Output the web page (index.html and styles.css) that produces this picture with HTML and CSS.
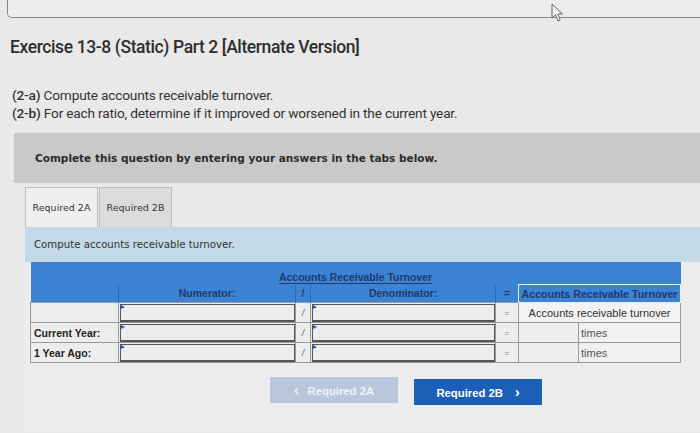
FILE: index.html
```html
<!DOCTYPE html>
<html>
<head>
<meta charset="utf-8">
<link rel="stylesheet" href="styles.css">
</head>
<body>
<div class="topbar"></div>
<svg class="cursor" width="14" height="20" viewBox="0 0 14 20"><path d="M1 1 L1 15 L4.5 11.8 L7 18 L9.2 17 L6.8 11 L11.5 11 Z" fill="#f2f2f2" stroke="#666" stroke-width="1"/></svg>
<h1 class="title">Exercise 13-8 (Static) Part 2 [Alternate Version]</h1>
<div class="prompt">
  <p><b>(2-a)</b> Compute accounts receivable turnover.</p>
  <p><b>(2-b)</b> For each ratio, determine if it improved or worsened in the current year.</p>
</div>
<div class="notice">Complete this question by entering your answers in the tabs below.</div>
<div class="tabs">
  <div class="tab active">Required 2A</div>
  <div class="tab">Required 2B</div>
</div>
<div class="instruction">Compute accounts receivable turnover.</div>
<div class="work">
<table class="grid">
  <colgroup>
    <col class="c-label"><col class="c-num"><col class="c-slash"><col class="c-den"><col class="c-eq"><col class="c-res"><col class="c-unit">
  </colgroup>
  <tr class="h1"><th colspan="7"><u>Accounts Receivable Turnover</u></th></tr>
  <tr class="h2">
    <th></th><th>Numerator:</th><th>/</th><th>Denominator:</th><th>=</th><th colspan="2" class="reshead">Accounts Receivable Turnover</th>
  </tr>
  <tr>
    <td class="label"></td>
    <td class="inp"><div class="box"></div></td><td class="op">/</td>
    <td class="inp"><div class="box"></div></td><td class="op eq">=</td>
    <td colspan="2" class="restext">Accounts receivable turnover</td>
  </tr>
  <tr>
    <td class="label">Current Year:</td>
    <td class="inp"><div class="box"></div></td><td class="op">/</td>
    <td class="inp"><div class="box"></div></td><td class="op eq">=</td>
    <td class="resin"></td><td class="unit">times</td>
  </tr>
  <tr>
    <td class="label">1 Year Ago:</td>
    <td class="inp"><div class="box"></div></td><td class="op">/</td>
    <td class="inp"><div class="box"></div></td><td class="op eq">=</td>
    <td class="resin"></td><td class="unit">times</td>
  </tr>
</table>
<div class="nav">
  <div class="btn prev"><span class="chev">&lsaquo;</span>Required 2A</div>
  <div class="btn next">Required 2B<span class="chev after">&rsaquo;</span></div>
</div>
</div>
</body>
</html>
```
FILE: styles.css
```css
html, body { margin: 0; padding: 0; }
body {
  width: 700px; height: 433px; overflow: hidden;
  background: #e9e9e9;
  font-family: "Liberation Sans", Arial, sans-serif;
  color: #333;
  position: relative;
}
.topbar {
  margin-left: 7px;
  height: 17px;
  border-left: 1px solid #888;
  border-bottom: 1px solid #888;
  border-bottom-left-radius: 5px;
  background: #ececec;
}
.cursor { position: absolute; left: 551px; top: 3px; }
.title {
  margin: 19px 0 0 10px;
  font-family: Roboto, sans-serif;
  font-weight: 500;
  font-size: 17.5px;
  letter-spacing: -0.4px;
  color: #2e2e2e;
  line-height: 20px;
}
.prompt {
  margin: 29px 0 0 12px;
  font-family: Roboto, sans-serif;
  font-size: 13.7px;
  letter-spacing: -0.2px;
  color: #333;
  line-height: 18px;
}
.prompt p { margin: 0; }
.prompt b { font-weight: 500; }
.notice {
  margin: 11px 0 0 14px;
  height: 50px;
  background: #c9c9c9;
  font-family: "DejaVu Sans", Verdana, sans-serif;
  font-weight: bold;
  font-size: 10.5px;
  color: #2b2b2b;
  padding-left: 21px;
  line-height: 50px;
}
.tabs {
  margin: 4px 0 0 25px;
  display: flex;
  gap: 1px;
  height: 40px;
}
.tab {
  width: 71px;
  border: 1px solid #bdbdbd;
  border-bottom: none;
  background: #dcdcdc;
  font-family: "DejaVu Sans", Verdana, sans-serif;
  font-size: 9.5px;
  color: #333;
  display: flex; align-items: center; justify-content: center;
}
.tab.active { background: #efefef; }
.instruction {
  margin-left: 25px;
  height: 35px;
  background: #c3d9e8;
  font-family: "DejaVu Sans", Verdana, sans-serif;
  font-size: 10.2px;
  color: #333;
  padding-left: 9px;
  line-height: 35px;
}
.work {
  margin-left: 25px;
  background: #ececec;
  padding: 0 0 0 5px;
  height: 170px;
}
.grid {
  border-collapse: collapse;
  table-layout: fixed;
  width: 650px;
  font-size: 11px;
}
.c-label { width: 88px; } .c-num { width: 177px; } .c-slash { width: 15px; }
.c-den { width: 185px; } .c-eq { width: 23px; } .c-res { width: 60px; } .c-unit { width: 102px; }
.grid th {
  background: #3d83d3;
  color: #1d3a6c;
  font-weight: bold;
  padding: 0;
  white-space: nowrap;
}
.h1 th { height: 21px; text-align: center; font-size: 10.5px; vertical-align: bottom; padding-bottom: 1px; }
.h1 th u { text-decoration-thickness: 1px; text-underline-offset: 2px; }
.h2 th { height: 17px; border-left: 1px solid #2f6cb3; font-size: 10.5px; }
.h2 th:first-child { border-left: none; }
.h2 th.reshead { border: 1px solid #e8eef6; font-size: 10.7px; }
.grid td {
  border: 1px solid #9a9a9a;
  height: 18px;
  padding: 0;
  background: #ededed;
}
.grid td.label { font-weight: bold; color: #222; padding-left: 3px; font-size: 10.5px; }
.grid td.inp { padding: 1px 0 0 1px; background: #ededed; }
.box {
  height: 15px;
  border: 1px solid #555;
  border-width: 1px 1px 2px 1px;
  background: #ececec;
  position: relative;
}
.box::before {
  content: ""; position: absolute; left: 0; top: 0;
  border-left: 4px solid #2a5db0;
  border-top: 2.5px solid transparent;
  border-bottom: 2.5px solid transparent;
}
.grid td.op { text-align: center; font-size: 9px; color: #555; font-style: italic; }
.grid td.eq { font-style: normal; color: #888; }
.grid td.restext { text-align: center; background: #f2f2f2; color: #333; }
.grid td.resin { background: #eeeeee; }
.grid td.unit { padding-left: 2px; color: #555; background: #f0f0f0; }
.nav {
  display: flex;
  gap: 16px;
  margin: 14px 0 0 240px;
}
.btn {
  width: 128px;
  height: 26px;
  line-height: 26px;
  text-align: center;
  font-size: 11.3px;
  font-weight: bold;
  color: #fff;
}
.chev { font-size: 14px; margin-right: 9px; }
.chev.after { margin: 0 0 0 12px; }
.btn.prev { background: #b8c8da; color: #eef3f8; }
.btn.next { background: #1b5fb8; margin-top: 2px; }
```
